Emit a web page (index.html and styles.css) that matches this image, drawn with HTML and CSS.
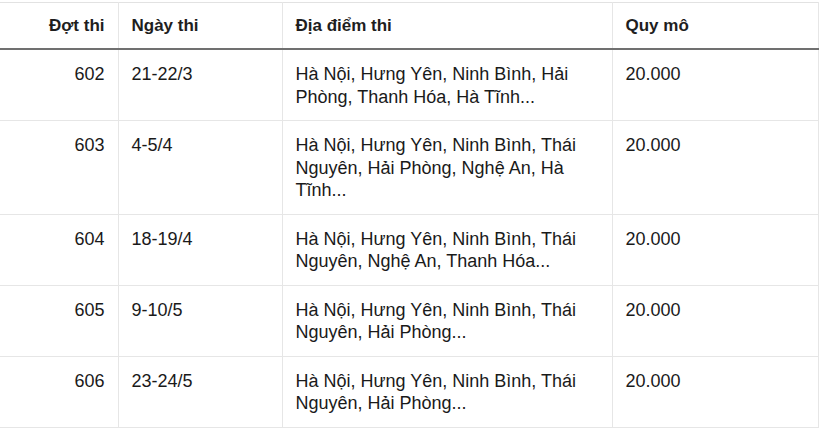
FILE: index.html
```html
<!DOCTYPE html>
<html lang="vi">
<head>
<meta charset="utf-8">
<title>Lịch thi</title>
<link rel="stylesheet" href="styles.css">
</head>
<body>
<table class="schedule">
  <colgroup>
    <col class="c-round">
    <col class="c-date">
    <col class="c-place">
    <col class="c-size">
  </colgroup>
  <thead>
    <tr>
      <th class="num">Đợt thi</th>
      <th>Ngày thi</th>
      <th>Địa điểm thi</th>
      <th>Quy mô</th>
    </tr>
  </thead>
  <tbody>
    <tr>
      <td class="num">602</td>
      <td>21-22/3</td>
      <td>Hà Nội, Hưng Yên, Ninh Bình, Hải Phòng, Thanh Hóa, Hà Tĩnh...</td>
      <td>20.000</td>
    </tr>
    <tr>
      <td class="num">603</td>
      <td>4-5/4</td>
      <td>Hà Nội, Hưng Yên, Ninh Bình, Thái Nguyên, Hải Phòng, Nghệ An, Hà Tĩnh...</td>
      <td>20.000</td>
    </tr>
    <tr>
      <td class="num">604</td>
      <td>18-19/4</td>
      <td>Hà Nội, Hưng Yên, Ninh Bình, Thái Nguyên, Nghệ An, Thanh Hóa...</td>
      <td>20.000</td>
    </tr>
    <tr>
      <td class="num">605</td>
      <td>9-10/5</td>
      <td>Hà Nội, Hưng Yên, Ninh Bình, Thái Nguyên, Hải Phòng...</td>
      <td>20.000</td>
    </tr>
    <tr>
      <td class="num">606</td>
      <td>23-24/5</td>
      <td>Hà Nội, Hưng Yên, Ninh Bình, Thái Nguyên, Hải Phòng...</td>
      <td>20.000</td>
    </tr>
  </tbody>
</table>
</body>
</html>
```

FILE: styles.css
```css
html, body {
  margin: 0;
  padding: 0;
  background: #ffffff;
}

body {
  padding-top: 2px;
  font-family: "Liberation Sans", Arial, Helvetica, sans-serif;
  color: #1a1a1a;
}

.schedule {
  width: 818px;
  border-collapse: collapse;
  table-layout: fixed;
  border-top: 1px solid #e2e2e2;
}

.c-round { width: 118px; }
.c-date { width: 164px; }
.c-place { width: 330px; }
.c-size { width: 206px; }

.schedule th,
.schedule td {
  text-align: left;
  vertical-align: top;
  border-left: 1px solid #e6e6e6;
  border-right: 1px solid #e6e6e6;
}

.schedule th:first-child,
.schedule td:first-child {
  border-left: none;
}

.schedule th {
  font-size: 17px;
  font-weight: bold;
  line-height: 23px;
  padding: 11px 13px 11px 13px;
  border-bottom: 2px solid #707070;
  color: #1e1e1e;
}

.schedule td {
  font-size: 18px;
  line-height: 22.5px;
  padding: 13px 13px 12px 13px;
  border-bottom: 1px solid #e6e6e6;
}

.schedule .num {
  text-align: right;
}
```
